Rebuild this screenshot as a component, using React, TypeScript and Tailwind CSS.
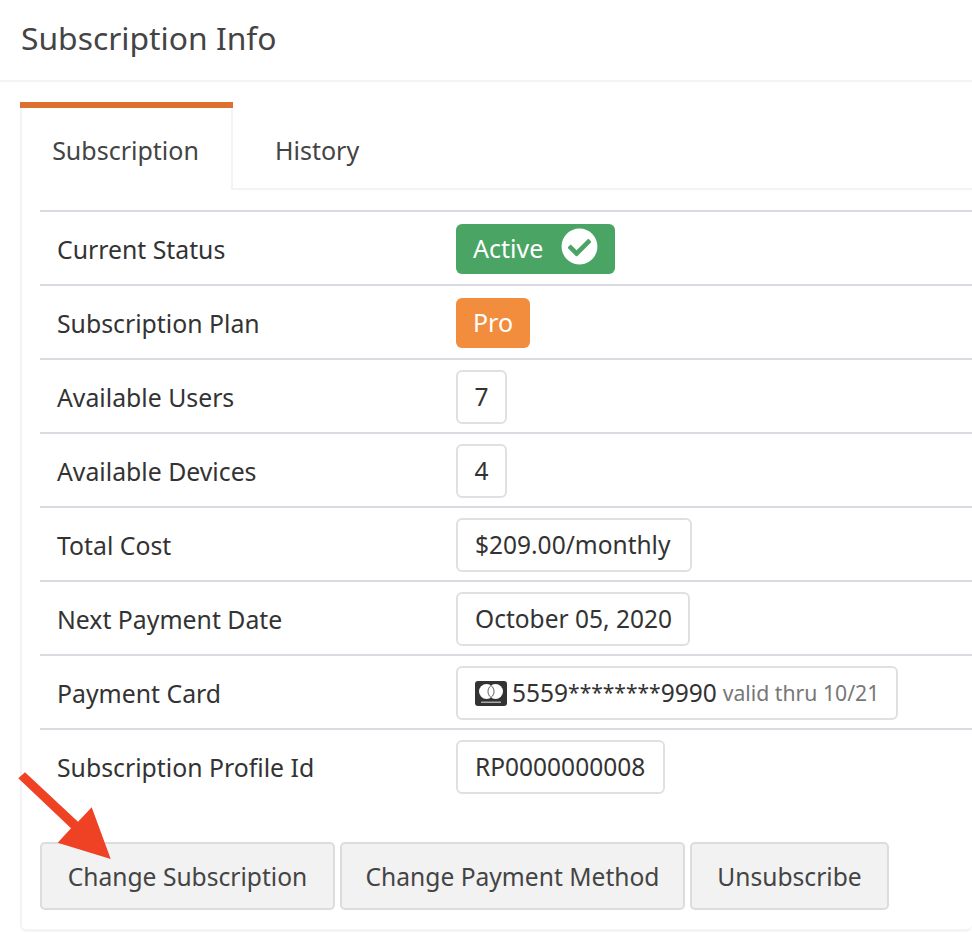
import { ReactNode } from "react";
import { FaCheckCircle } from "react-icons/fa";

const rows: { label: string; value: ReactNode }[] = [
  {
    label: "Current Status",
    value: (
      <span className="flex h-[50px] w-[159px] items-center rounded-[6px] bg-[#4aa564] pl-[17px] text-[25px] text-white">
        <span className="w-[71px]">Active</span>
        <FaCheckCircle className="mb-[5px] ml-[17px] h-[37px] w-[37px]" />
      </span>
    ),
  },
  {
    label: "Subscription Plan",
    value: <span className="flex h-[50px] w-[74px] items-center justify-center rounded-[6px] bg-[#f28d3e] text-[25px] text-white">Pro</span>,
  },
  { label: "Available Users", value: <Box className="w-[51px] justify-center">7</Box> },
  { label: "Available Devices", value: <Box className="w-[51px] justify-center">4</Box> },
  { label: "Total Cost", value: <Box className="w-[236px] pl-[17px]">$209.00/monthly</Box> },
  { label: "Next Payment Date", value: <Box className="w-[234px] pl-[17px]">October 05, 2020</Box> },
  {
    label: "Payment Card",
    value: (
      <Box className="w-[442px] pl-[17px]">
        <svg viewBox="0 0 32 25" className="mr-[5px] h-[25px] w-[32px]">
          <rect width="32" height="25" rx="3" fill="#333" />
          <circle cx="11.5" cy="10.5" r="7.5" fill="#fff" />
          <circle cx="20.5" cy="10.5" r="7.5" fill="#fff" />
          <path d="M16 4.5a7.5 7.5 0 0 1 0 12a7.5 7.5 0 0 1 0-12z" fill="#fff" stroke="#333" strokeWidth="0.8" />
          <rect x="6" y="20.5" width="20" height="1.5" fill="#aaa" />
        </svg>
        <span>5559</span>
        <span className="text-[21px]">********</span>
        <span>9990</span>
        <span className="ml-[6px] text-[21.2px] text-[#777]">valid thru 10/21</span>
      </Box>
    ),
  },
  { label: "Subscription Profile Id", value: <Box className="w-[209px] pl-[17px]">RP0000000008</Box> },
];

function Box({ children, className }: { children: ReactNode; className: string }) {
  return (
    <span className={`flex h-[54px] items-center rounded-[6px] border-2 border-[#e0e0e0] bg-white text-[24.5px] ${className}`}>
      {children}
    </span>
  );
}

function ActionButton({ children, className }: { children: ReactNode; className: string }) {
  return (
    <button className={`h-[68px] rounded-[5px] border-2 border-[#dcdcdc] bg-[#f2f2f2] pt-[2px] text-[24.6px] text-[#444] ${className}`}>
      {children}
    </button>
  );
}

export default function App() {
  return (
    <div className="h-[934px] w-[972px] overflow-hidden bg-white font-['Noto_Sans',sans-serif] text-[24.8px] text-[#333]">
      <div className="flex h-[82px] items-center border-b-2 border-[#f2f3f5] pb-[4px] pl-[21px] text-[31.8px] text-[#444]">
        Subscription Info
      </div>

      <div className="relative ml-[20px] mt-[20px] h-[829px] rounded-b-[6px] border-b-2 border-l-2 border-[#f2f3f5] shadow-[0_1px_1px_rgba(0,0,0,0.04)]">
        <div className="flex h-[88px] text-[25px] text-[#444]">
          <div className="-ml-[2px] flex w-[213px] flex-col">
            <div className="h-[6px] bg-[#dd6f2f]" />
            <div className="flex flex-1 items-center justify-center border-r-2 border-[#f2f3f5] pt-[4px]">Subscription</div>
          </div>
          <div className="flex flex-1 items-center border-b-2 border-[#f2f3f5] pl-[42px] pt-[12px]">History</div>
        </div>

        <div className="ml-[18px] mt-[20px] border-t-2 border-[#d8dce0]">
          {rows.map((row, i) => (
            <div
              key={row.label}
              className={`flex h-[74px] items-center border-b-2 pt-[2px] ${i < rows.length - 1 ? "border-[#d8dce0]" : "border-transparent"}`}
            >
              <div className="w-[416px] pl-[17px] pt-[1px]">{row.label}</div>
              {row.value}
            </div>
          ))}
        </div>

        <div className="ml-[18px] flex gap-[5px] pt-[38px]">
          <ActionButton className="w-[295px]">Change Subscription</ActionButton>
          <ActionButton className="w-[345px]">Change Payment Method</ActionButton>
          <ActionButton className="w-[199px]">Unsubscribe</ActionButton>
        </div>

        <svg viewBox="0 762 120 100" className="absolute left-[-22px] top-[660px] h-[100px] w-[120px]">
          <path d="M18.3 778.3L25 772.3L78 821.7L91.7 807.3L110.7 859L57.7 842.7L71 828.3Z" fill="#ef4123" />
        </svg>
      </div>
    </div>
  );
}
